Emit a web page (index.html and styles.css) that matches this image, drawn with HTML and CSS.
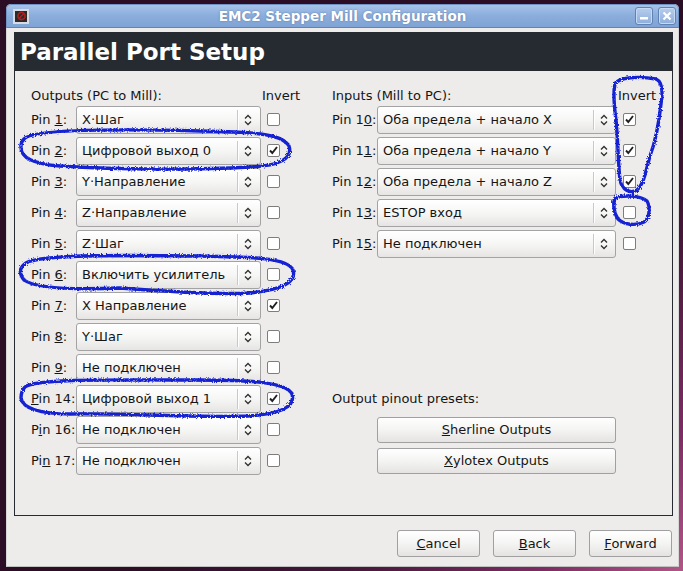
FILE: index.html
```html
<!DOCTYPE html>
<html lang="ru">
<head>
    <meta charset="UTF-8">
    <title>EMC2 Stepper Mill Configuration</title>
    <link rel="stylesheet" href="styles.css">
</head>
<body>
<div class="desktop">
    <div class="window">
        <div class="titlebar">
            <span class="app-icon">
                <svg width="11" height="10" viewBox="0 0 11 10"><circle cx="5.5" cy="5" r="3.6" fill="none" stroke="#b02020" stroke-width="1.6"/><path d="M3 7.5 L8 2.5" stroke="#b02020" stroke-width="1.4"/></svg>
            </span>
            <span class="title">EMC2 Stepper Mill Configuration</span>
            <span class="wm-buttons">
                <span class="wm-btn"><svg width="10" height="10" viewBox="0 0 10 10"><rect x="1" y="6" width="8" height="2.5" fill="#fff"/></svg></span>
                <span class="wm-btn"><svg width="10" height="10" viewBox="0 0 10 10"><path d="M1.5 1.5 L8.5 8.5 M8.5 1.5 L1.5 8.5" stroke="#fff" stroke-width="2.2"/></svg></span>
            </span>
        </div>

        <div class="window-body">
            <div class="page">
                <div class="banner">Parallel Port Setup</div>
                <div class="content">

                    <div class="pins outputs">
                        <div class="col-title">Outputs (PC to Mill):</div>
                        <div class="inv-title">Invert</div>

                        <div class="pin">Pin <u>1</u>:</div>
                        <div class="combo"><span class="combo-text">X·Шаг</span><span class="combo-sep"></span><span class="combo-arrow"></span></div>
                        <div class="check-cell"><span class="check"></span></div>

                        <div class="pin">Pin <u>2</u>:</div>
                        <div class="combo"><span class="combo-text">Цифровой выход 0</span><span class="combo-sep"></span><span class="combo-arrow"></span></div>
                        <div class="check-cell"><span class="check on"></span></div>

                        <div class="pin">Pin <u>3</u>:</div>
                        <div class="combo"><span class="combo-text">Y·Направление</span><span class="combo-sep"></span><span class="combo-arrow"></span></div>
                        <div class="check-cell"><span class="check"></span></div>

                        <div class="pin">Pin <u>4</u>:</div>
                        <div class="combo"><span class="combo-text">Z·Направление</span><span class="combo-sep"></span><span class="combo-arrow"></span></div>
                        <div class="check-cell"><span class="check"></span></div>

                        <div class="pin">Pin <u>5</u>:</div>
                        <div class="combo"><span class="combo-text">Z·Шаг</span><span class="combo-sep"></span><span class="combo-arrow"></span></div>
                        <div class="check-cell"><span class="check"></span></div>

                        <div class="pin">Pin <u>6</u>:</div>
                        <div class="combo"><span class="combo-text">Включить усилитель</span><span class="combo-sep"></span><span class="combo-arrow"></span></div>
                        <div class="check-cell"><span class="check"></span></div>

                        <div class="pin">Pin <u>7</u>:</div>
                        <div class="combo"><span class="combo-text">X Направление</span><span class="combo-sep"></span><span class="combo-arrow"></span></div>
                        <div class="check-cell"><span class="check on"></span></div>

                        <div class="pin">Pin <u>8</u>:</div>
                        <div class="combo"><span class="combo-text">Y·Шаг</span><span class="combo-sep"></span><span class="combo-arrow"></span></div>
                        <div class="check-cell"><span class="check"></span></div>

                        <div class="pin">Pin <u>9</u>:</div>
                        <div class="combo"><span class="combo-text">Не подключен</span><span class="combo-sep"></span><span class="combo-arrow"></span></div>
                        <div class="check-cell"><span class="check"></span></div>

                        <div class="pin"><u>P</u>in 14:</div>
                        <div class="combo"><span class="combo-text">Цифровой выход 1</span><span class="combo-sep"></span><span class="combo-arrow"></span></div>
                        <div class="check-cell"><span class="check on"></span></div>

                        <div class="pin">P<u>i</u>n 16:</div>
                        <div class="combo"><span class="combo-text">Не подключен</span><span class="combo-sep"></span><span class="combo-arrow"></span></div>
                        <div class="check-cell"><span class="check"></span></div>

                        <div class="pin">Pi<u>n</u> 17:</div>
                        <div class="combo"><span class="combo-text">Не подключен</span><span class="combo-sep"></span><span class="combo-arrow"></span></div>
                        <div class="check-cell"><span class="check"></span></div>
                    </div>

                    <div class="pins inputs">
                        <div class="col-title">Inputs (Mill to PC):</div>
                        <div class="inv-title">Invert</div>

                        <div class="pin">Pin 1<u>0</u>:</div>
                        <div class="combo"><span class="combo-text">Оба предела + начало X</span><span class="combo-sep"></span><span class="combo-arrow"></span></div>
                        <div class="check-cell"><span class="check on"></span></div>

                        <div class="pin">Pin 1<u>1</u>:</div>
                        <div class="combo"><span class="combo-text">Оба предела + начало Y</span><span class="combo-sep"></span><span class="combo-arrow"></span></div>
                        <div class="check-cell"><span class="check on"></span></div>

                        <div class="pin">Pin 1<u>2</u>:</div>
                        <div class="combo"><span class="combo-text">Оба предела + начало Z</span><span class="combo-sep"></span><span class="combo-arrow"></span></div>
                        <div class="check-cell"><span class="check on"></span></div>

                        <div class="pin">Pin 1<u>3</u>:</div>
                        <div class="combo"><span class="combo-text">ESTOP вход</span><span class="combo-sep"></span><span class="combo-arrow"></span></div>
                        <div class="check-cell"><span class="check"></span></div>

                        <div class="pin">Pin 1<u>5</u>:</div>
                        <div class="combo"><span class="combo-text">Не подключен</span><span class="combo-sep"></span><span class="combo-arrow"></span></div>
                        <div class="check-cell"><span class="check"></span></div>

                        <div class="presets-title">Output pinout presets:</div>
                        <button class="btn preset sherline"><u>S</u>herline Outputs</button>
                        <button class="btn preset xylotex"><u>X</u>ylotex Outputs</button>
                    </div>

                </div>
            </div>

            <div class="actions">
                <button class="btn"><u>C</u>ancel</button>
                <button class="btn"><u>B</u>ack</button>
                <button class="btn"><u>F</u>orward</button>
            </div>
        </div>
    </div>

    <!-- hand-drawn marks on top of the screenshot -->
    <svg class="marks" width="683" height="571" viewBox="0 0 683 571">
        <defs>
            <filter id="wobble" x="-5%" y="-5%" width="110%" height="110%">
                <feTurbulence type="fractalNoise" baseFrequency="0.7" numOctaves="2" seed="7"/>
                <feDisplacementMap in="SourceGraphic" scale="3.5"/>
            </filter>
        </defs>
        <g fill="none" stroke="#1424d2" stroke-width="3.4" stroke-linejoin="round" filter="url(#wobble)">
            <path d="M24 139 C32 129 120 129 200 131 C250 132 282 133 289 146 C293 158 280 166 250 167 C200 170 120 170 60 166 C34 164 20 158 21 146 C21 143 22 141 24 139 Z"/>
            <path d="M26 263 C40 254 130 255 200 256 C255 257 288 258 293 270 C297 283 280 290 250 293 C220 295 160 291 120 288 C70 290 35 288 24 280 C18 273 20 267 26 263 Z"/>
            <path d="M25 387 C36 378 120 380 200 380 C255 380 287 383 292 394 C296 408 278 414 248 416 C200 418 130 413 70 414 C40 414 22 408 21 398 C21 393 22 390 25 387 Z"/>
            <path d="M615 84 C618 77 640 76 656 79 C663 82 663 92 661 104 C659 122 656 140 650 156 C646 170 644 184 637 190 C630 194 622 190 620 180 C618 162 618 140 616 120 C614 105 613 92 615 84 Z"/>
            <path d="M615 198 C622 195 640 195 647 201 C651 208 649 219 644 222 C636 226 624 225 618 219 C613 212 613 202 615 198 Z"/>
        </g>
    </svg>
</div>
</body>
</html>
```

FILE: styles.css
```css
html, body {
    margin: 0;
    padding: 0;
}
body {
    font-family: "DejaVu Sans", sans-serif;
    font-size: 13px;
    color: #151515;
}
.desktop {
    position: relative;
    width: 683px;
    height: 571px;
    overflow: hidden;
    background: radial-gradient(circle at 100% 100%, #b25487 0, #7c2c62 140px, #431737 340px, #2b0d25 560px);
    padding-top: 4px;
    box-sizing: border-box;
}
.window {
    margin-left: 6px;
    width: 673px;
    height: 563px;
    display: flex;
    flex-direction: column;
    border-radius: 5px 5px 0 0;
    background: #edecea;
}
.titlebar {
    height: 24px;
    display: flex;
    align-items: center;
    position: relative;
    border-radius: 5px 5px 0 0;
    background: linear-gradient(#a6c2e8, #8aaddc 50%, #7fa3d4);
    border: 1px solid #6f93c4;
    border-bottom-color: #5f84b8;
    box-sizing: border-box;
}
.app-icon {
    width: 12px;
    height: 11px;
    margin-left: 6px;
    background: #2a2a2a;
    border: 2px solid #d8dce2;
    display: flex;
    align-items: center;
    justify-content: center;
}
.title {
    position: absolute;
    left: 0;
    right: 0;
    text-align: center;
    font-weight: bold;
    font-size: 13.5px;
    color: #fff;
    text-shadow: 0 0 2px #5a7aa8;
}
.wm-buttons {
    margin-left: auto;
    margin-right: 2px;
    display: flex;
    gap: 5px;
    position: relative;
}
.wm-btn {
    width: 16px;
    height: 16px;
    border: 1px solid #5f82b4;
    border-radius: 3px;
    background: linear-gradient(#b6cdee, #8eaedb);
    box-shadow: inset 0 0 0 1px #c8d9f2;
    display: flex;
    align-items: center;
    justify-content: center;
}
.window-body {
    flex: 1;
    display: flex;
    flex-direction: column;
    padding: 4px 5px 9px 7px;
    border-left: 1px solid #d6d6d6;
    border-right: 1px solid #d6d6d6;
    border-bottom: 1px solid #c0c0c0;
}
.page {
    flex: 1;
    border: 1px solid #262b31;
    display: flex;
    flex-direction: column;
}
.banner {
    height: 38px;
    background: #262b31;
    color: #fff;
    font-weight: bold;
    font-size: 23px;
    line-height: 38px;
    padding-left: 5px;
}
.content {
    flex: 1;
    display: flex;
    gap: 32px;
    padding: 15px 0 0 16px;
}
.pins {
    display: grid;
    grid-template-rows: 18px;
    grid-auto-rows: 31px;
    align-items: center;
}
.outputs {
    grid-template-columns: 45px 185px 39px;
}
.inputs {
    grid-template-columns: 45px 239px 44px;
}
.col-title {
    grid-column: 1 / 3;
}
.inv-title {
    padding-left: 1px;
}
.inputs .inv-title {
    padding-left: 2px;
}
.pin {
    white-space: nowrap;
}
.combo {
    height: 28px;
    box-sizing: border-box;
    border: 1px solid #a3a3a3;
    border-radius: 3px;
    background: linear-gradient(#ffffff, #f6f6f5 50%, #e6e5e3);
    display: flex;
    align-items: center;
    white-space: nowrap;
    overflow: hidden;
}
.combo-text {
    flex: 1;
    padding-left: 5px;
}
.combo-sep {
    align-self: stretch;
    margin: 3px 0;
    width: 1px;
    background: #c9c8c6;
    box-shadow: 1px 0 0 #fff;
}
.combo-arrow {
    width: 8px;
    height: 12px;
    margin: 0 8px 0 6px;
    background: url("data:image/svg+xml,%3Csvg xmlns='http://www.w3.org/2000/svg' width='8' height='12' viewBox='0 0 8 12'%3E%3Cpath d='M1 4.5 L4 1.5 L7 4.5 M1 7.5 L4 10.5 L7 7.5' fill='none' stroke='%23303030' stroke-width='1.3'/%3E%3C/svg%3E") no-repeat;
}
.inputs .combo-arrow {
    margin: 0 7px 0 6px;
}
.check-cell {
    display: flex;
    align-items: center;
    padding-left: 6px;
}
.inputs .check-cell {
    padding-left: 7px;
}
.check {
    width: 13px;
    height: 13px;
    box-sizing: border-box;
    border: 1px solid #7d7d7d;
    border-radius: 2px;
    background: #fff;
}
.check.on {
    background: #fff url("data:image/svg+xml,%3Csvg xmlns='http://www.w3.org/2000/svg' width='11' height='11' viewBox='0 0 11 11'%3E%3Cpath d='M2 5.5 L4.3 8 L9 2' fill='none' stroke='%23202020' stroke-width='1.9'/%3E%3C/svg%3E") no-repeat center;
}
.presets-title {
    grid-row: 11;
    grid-column: 1 / 4;
}
.btn {
    font-family: "DejaVu Sans", sans-serif;
    font-size: 13px;
    color: #151515;
    border: 1px solid #a0a0a0;
    border-radius: 3px;
    background: linear-gradient(#ffffff, #f4f4f3 50%, #e4e3e1);
    padding: 0;
    height: 27px;
}
.preset {
    grid-column: 2;
    height: 26px;
}
.sherline {
    grid-row: 12;
}
.xylotex {
    grid-row: 13;
}
.actions {
    display: flex;
    justify-content: flex-end;
    gap: 13px;
    margin-top: 14px;
    padding-right: 1px;
}
.actions .btn {
    width: 83px;
}
.marks {
    position: absolute;
    left: 0;
    top: 0;
    pointer-events: none;
}
```
